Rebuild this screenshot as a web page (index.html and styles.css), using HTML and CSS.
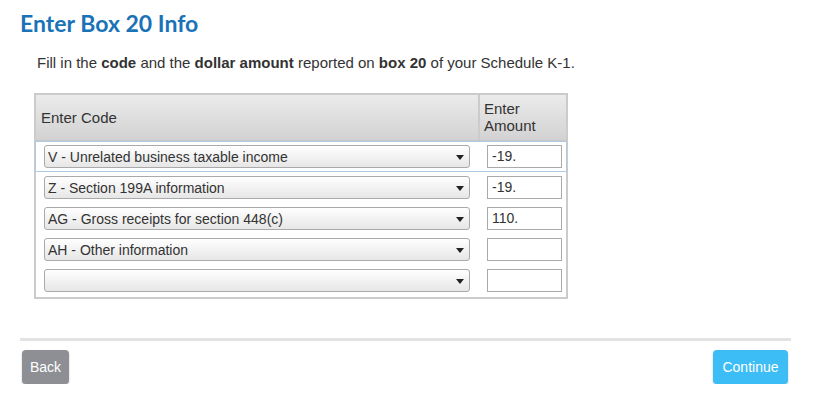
FILE: index.html
```html
<!DOCTYPE html>
<html>
<head>
<meta charset="utf-8">
<link rel="stylesheet" href="styles.css">
</head>
<body>
<div class="page">
  <h1 class="title">Enter Box 20 Info</h1>
  <p class="intro">Fill in the <b>code</b> and the <b>dollar amount</b> reported on <b>box 20</b> of your Schedule K-1.</p>

  <div class="grid">
    <div class="head">
      <div class="hcode">Enter Code</div>
      <div class="hamt">Enter<br>Amount</div>
    </div>
    <div class="row active">
      <div class="cell-code"><div class="select"><span>V - Unrelated business taxable income</span><svg class="arrow" width="8" height="5" viewBox="0 0 8 5"><path d="M0 0H8L4 5Z" fill="#222"/></svg></div></div>
      <div class="cell-amt"><div class="input">-19.</div></div>
    </div>
    <div class="row">
      <div class="cell-code"><div class="select"><span>Z - Section 199A information</span><svg class="arrow" width="8" height="5" viewBox="0 0 8 5"><path d="M0 0H8L4 5Z" fill="#222"/></svg></div></div>
      <div class="cell-amt"><div class="input">-19.</div></div>
    </div>
    <div class="row">
      <div class="cell-code"><div class="select"><span>AG - Gross receipts for section 448(c)</span><svg class="arrow" width="8" height="5" viewBox="0 0 8 5"><path d="M0 0H8L4 5Z" fill="#222"/></svg></div></div>
      <div class="cell-amt"><div class="input">110.</div></div>
    </div>
    <div class="row">
      <div class="cell-code"><div class="select"><span>AH - Other information</span><svg class="arrow" width="8" height="5" viewBox="0 0 8 5"><path d="M0 0H8L4 5Z" fill="#222"/></svg></div></div>
      <div class="cell-amt"><div class="input"></div></div>
    </div>
    <div class="row last">
      <div class="cell-code"><div class="select"><span></span><svg class="arrow" width="8" height="5" viewBox="0 0 8 5"><path d="M0 0H8L4 5Z" fill="#222"/></svg></div></div>
      <div class="cell-amt"><div class="input"></div></div>
    </div>
  </div>

  <div class="footer">
    <button class="btn back">Back</button>
    <button class="btn continue">Continue</button>
  </div>
</div>
</body>
</html>
```

FILE: styles.css
```css
* { box-sizing: border-box; }
body {
  margin: 0;
  background: #fff;
  font-family: "Liberation Sans", Arial, sans-serif;
  color: #333;
}
.page {
  padding: 9px 0 0 20px;
  width: 791px;
}
.title {
  margin: 0;
  font-family: "Lato", "Open Sans", sans-serif;
  font-weight: 700;
  font-size: 23px;
  line-height: 28px;
  color: #1a73b7;
}
.intro {
  margin: 17px 0 0 17px;
  font-size: 15px;
  line-height: 18px;
  color: #333;
}
.grid {
  margin: 21px 0 0 14px;
  width: 534px;
  border: 2px solid #cbcbcb;
}
.head {
  display: grid;
  grid-template-columns: 442px 1fr;
  height: 46px;
  background: linear-gradient(#ebebeb, #d2d2d2);
  border-bottom: 1px solid #c8c8c8;
}
.hcode {
  display: flex;
  align-items: center;
  padding-left: 5px;
  font-size: 15px;
  color: #333;
}
.hamt {
  border-left: 2px solid #cbcbcb;
  padding: 5px 0 0 4px;
  font-size: 15px;
  line-height: 17px;
  color: #333;
}
.row {
  display: grid;
  grid-template-columns: 442px 1fr;
  height: 31px;
  align-items: center;
  border: 1px solid transparent;
  margin: 0 -1px;
}
.row.active {
  border-color: #aecbe6;
}
.row.last { height: 32px; align-items: start; padding-top: 3px; }
.cell-code { padding-left: 8px; }
.cell-amt { padding-left: 9px; }
.select {
  width: 426px;
  height: 23px;
  border: 1px solid #aaa;
  border-radius: 3px;
  background: linear-gradient(#ffffff, #e6e6e6);
  display: flex;
  align-items: center;
  justify-content: space-between;
  padding: 0 5px 0 3px;
  font-size: 14px;
  color: #333;
}
.arrow { margin-top: 1px; }
.input {
  width: 75px;
  height: 23px;
  border: 1px solid #aaa;
  background: #fff;
  font-size: 14px;
  line-height: 21px;
  padding-left: 4px;
  color: #333;
}
.footer {
  margin-top: 39px;
  border-top: 3px solid #e3e3e3;
  width: 771px;
  display: flex;
  justify-content: space-between;
  align-items: flex-start;
  padding-top: 9px;
}
.btn {
  border: none;
  border-radius: 4px;
  height: 34px;
  font-family: "Liberation Sans", Arial, sans-serif;
  font-size: 14px;
  color: #fff;
  box-shadow: 0 1px 2px rgba(0,0,0,0.25);
  cursor: pointer;
}
.btn.back {
  margin-left: 2px;
  width: 47px;
  background: #8d8f94;
}
.btn.continue {
  margin-right: 3px;
  width: 75px;
  background: #3dbdf5;
}
```
